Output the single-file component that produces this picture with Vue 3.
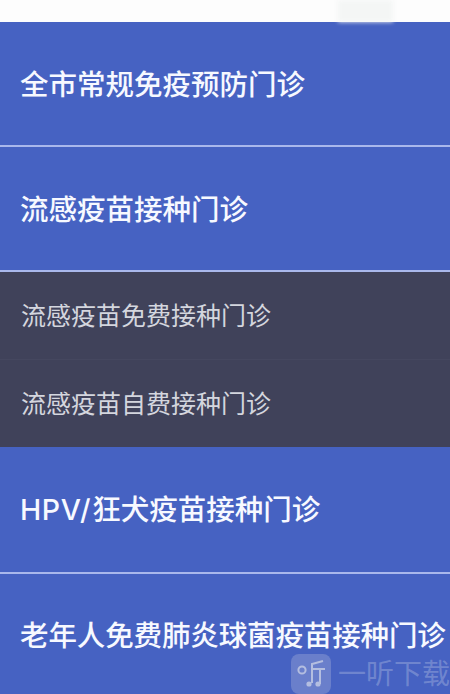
<script setup>
const groupOne = ['全市常规免疫预防门诊', '流感疫苗接种门诊']
const subItems = ['流感疫苗免费接种门诊', '流感疫苗自费接种门诊']
</script>

<template>
  <main class="page">
    <div class="top"><span class="smudge"></span></div>
    <div v-for="item in groupOne" :key="item" class="row lifted">{{ item }}</div>
    <div class="subs">
      <div v-for="item in subItems" :key="item" class="sub">{{ item }}</div>
    </div>
    <div class="row tall"><span class="latin">HPV/</span>狂犬疫苗接种门诊</div>
    <div class="row last">老年人免费肺炎球菌疫苗接种门诊</div>
    <div class="mark">
      <div class="logo">
        <svg width="40" height="40" viewBox="0 0 40 40" fill="none" stroke="#b4bee0" stroke-width="2">
          <circle cx="11" cy="16" r="3.6" />
          <path d="M32 7 21 10v19" />
          <path d="M21 15h13M29 15v15" />
          <circle cx="18" cy="30" r="2.6" fill="#b4bee0" stroke="none" />
          <circle cx="27" cy="30" r="2.6" fill="#b4bee0" stroke="none" />
        </svg>
      </div>
      <span class="mark-text">一听下载</span>
    </div>
  </main>
</template>

<style scoped>
.page {
  position: relative;
  width: 450px;
  height: 694px;
  overflow: hidden;
  background: #4662c2;
  font-family: Inter, "Noto Sans CJK SC", "Liberation Sans", sans-serif;
}
.top {
  height: 22px;
  background: #fdfdfd;
  display: flex;
  justify-content: flex-end;
  padding-right: 57px;
}
.smudge {
  width: 55px;
  height: 22px;
  background: #f4f6f5;
  filter: blur(2px);
}
.row {
  box-sizing: border-box;
  height: 125px;
  display: flex;
  align-items: center;
  padding-left: 20px;
  border-bottom: 2px solid #a9b8ec;
  color: #f7f9ff;
  font-size: 28.5px;
  line-height: 36px;
  font-weight: 500;
  white-space: nowrap;
}
.lifted {
  padding-top: 2px;
}
.tall {
  height: 127px;
}
.latin {
  letter-spacing: 0.6px;
  margin-right: 1px;
}
.last {
  height: 120px;
  border-bottom: 0;
  padding-top: 3px;
  letter-spacing: -0.12px;
}
.subs {
  background: #40425a;
  height: 175px;
  display: flex;
  flex-direction: column;
}
.sub {
  flex: 1;
  display: flex;
  align-items: center;
  padding-left: 21px;
  color: #d4d6de;
  font-size: 25px;
  line-height: 32px;
  border-bottom: 1px solid #45475f;
}
.sub:last-child {
  border-bottom: 0;
}
.mark {
  position: absolute;
  left: 291px;
  top: 654px;
  width: 159px;
  height: 40px;
  display: flex;
  gap: 7px;
  align-items: center;
}
.logo {
  width: 40px;
  height: 40px;
  flex: none;
  border-radius: 8px;
  background: rgba(200, 205, 225, 0.28);
}
.mark-text {
  color: rgba(190, 200, 230, 0.36);
  font-size: 28px;
  line-height: 36px;
  white-space: nowrap;
}
</style>
